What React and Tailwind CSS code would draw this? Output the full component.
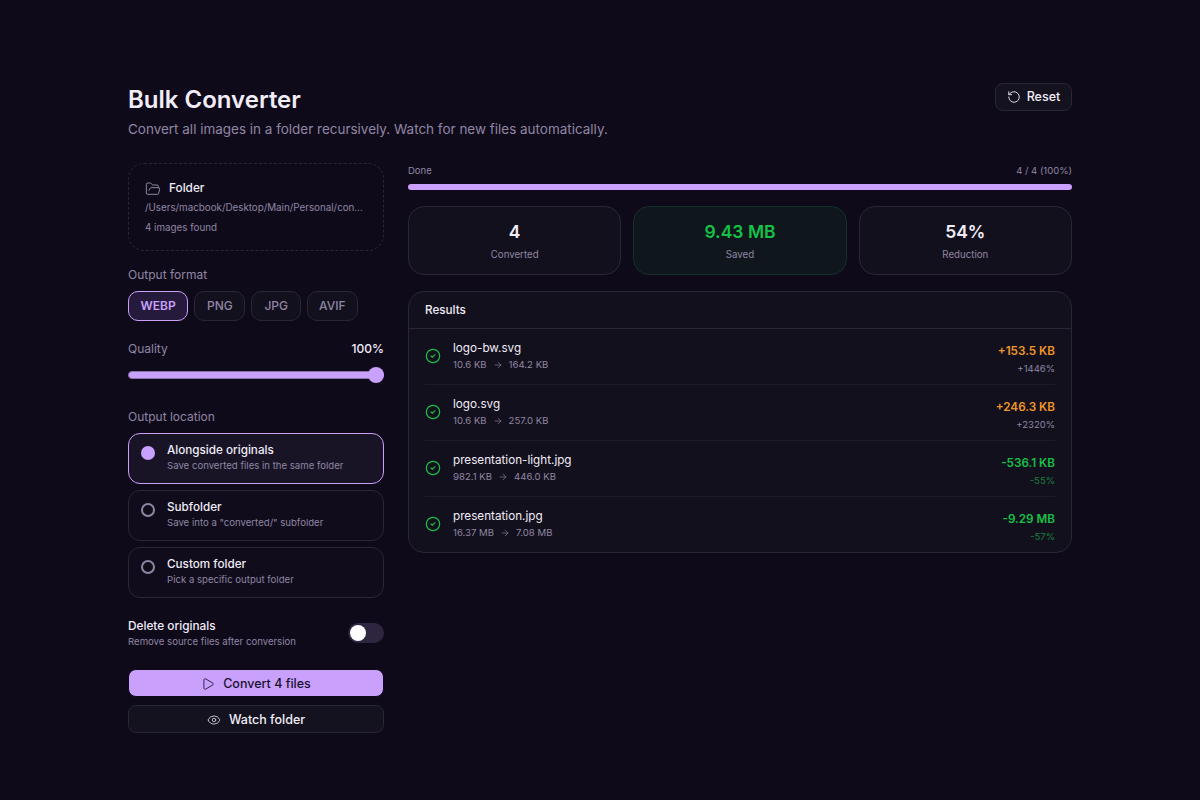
import React from 'react';
import { RotateCcw, FolderOpen, Play, Eye, CircleCheck, ArrowRight } from 'lucide-react';

const rows = [
  { name: 'logo-bw.svg', from: '10.6 KB', to: '164.2 KB', d: '+153.5 KB', p: '+1446%', up: true },
  { name: 'logo.svg', from: '10.6 KB', to: '257.0 KB', d: '+246.3 KB', p: '+2320%', up: true },
  { name: 'presentation-light.jpg', from: '982.1 KB', to: '446.0 KB', d: '-536.1 KB', p: '-55%', up: false },
  { name: 'presentation.jpg', from: '16.37 MB', to: '7.08 MB', d: '-9.29 MB', p: '-57%', up: false },
];
const locations = [
  { t: 'Alongside originals', s: 'Save converted files in the same folder', on: true },
  { t: 'Subfolder', s: 'Save into a "converted/" subfolder' },
  { t: 'Custom folder', s: 'Pick a specific output folder' },
];

function Stat({ value, label, green }) {
  return (
    <div className={`flex-1 h-[69px] rounded-2xl border flex flex-col items-center pt-[15px] ${green ? 'border-[#15302c] bg-[#0f161c]' : 'border-[#2a2635] bg-[#13101d]'}`}>
      <div className={`text-[17.5px] leading-5 font-semibold ${green ? 'text-[#16c047]' : 'text-[#f1edf8]'}`}>{value}</div>
      <div className="text-[9.7px] leading-4 mt-[5px] text-[#8f86a3]">{label}</div>
    </div>
  );
}

export default function App() {
  return (
    <div className="min-h-[800px] bg-[#0f0a1a] font-['Inter',sans-serif] text-[#f1edf8] pt-[83px] px-[128px]">
      <div className="flex justify-between items-start">
        <div>
          <h1 className="text-2xl leading-8 font-semibold text-[#f1edf8] pt-px">Bulk Converter</h1>
          <p className="text-[13.48px] leading-5 mt-[3px] text-[#8f86a3]">Convert all images in a folder recursively. Watch for new files automatically.</p>
        </div>
        <button className="h-7 w-[77px] rounded-lg border border-[#2a2635] bg-[#15121f] flex items-center justify-center gap-1.5 text-[12.5px] font-medium text-[#f1edf8]">
          <RotateCcw size={14} strokeWidth={1.5} />Reset
        </button>
      </div>

      <div className="flex gap-6 mt-[24px]">
        <div className="w-[256px] shrink-0">
          <div className="h-[88px] rounded-2xl border border-dashed border-[#2a2635] px-4 pt-[17px]">
            <div className="flex items-center gap-2 h-4 text-[11.8px] font-medium text-[#f1edf8]">
              <FolderOpen size={16} strokeWidth={1.25} className="text-[#a79fb8]" />Folder
            </div>
            <div className="text-[9.8px] leading-4 mt-[3px] truncate text-[#8f86a3]">/Users/macbook/Desktop/Main/Personal/converter/images</div>
            <div className="text-[9.8px] leading-4 mt-[4px] text-[#8f86a3]">4 images found</div>
          </div>

          <div className="text-xs leading-4 mt-[16px] text-[#8f86a3]">Output format</div>
          <div className="flex gap-1.5 mt-2">
            <button className="h-[30px] w-[60.4px] rounded-[10px] border border-[#c9a0fb] bg-[#261a3c] text-xs font-semibold text-[#c9a0fb]">WEBP</button>
            <button className="h-[30px] w-[51px] rounded-[10px] border border-[#2a2635] bg-[#13101d] text-xs font-medium text-[#8f86a3]">PNG</button>
            <button className="h-[30px] w-[49.6px] rounded-[10px] border border-[#2a2635] bg-[#13101d] text-xs font-medium text-[#8f86a3]">JPG</button>
            <button className="h-[30px] w-[50.6px] rounded-[10px] border border-[#2a2635] bg-[#13101d] text-xs font-medium text-[#8f86a3]">AVIF</button>
          </div>

          <div className="flex justify-between items-center mt-[20px] h-4 text-xs">
            <span className="text-[#8f86a3]">Quality</span>
            <span className="font-medium text-[#f1edf8]">100%</span>
          </div>
          <div className="relative h-4 mt-[10px] flex items-center">
            <div className="h-2 w-full rounded-full bg-[#c9a0fb] border border-[#8a72ab]" />
            <div className="absolute right-0 top-0 w-4 h-4 rounded-full bg-[#c9a0fb]" />
          </div>

          <div className="text-xs leading-4 mt-[26px] text-[#8f86a3]">Output location</div>
          <div className="flex flex-col gap-1.5 mt-2">
            {locations.map((l) => (
              <div key={l.t} className={`h-[51px] rounded-xl border flex items-start pl-3 pt-2 gap-3 ${l.on ? 'border-[#c9a0fb] bg-[#181426]' : 'border-[#2a2635] bg-[#100c1b]'}`}>
                <div className={`w-3.5 h-3.5 rounded-full shrink-0 mt-1 ${l.on ? 'bg-[#c9a0fb]' : 'border-2 border-[#8f86a3]'}`} />
                <div className="min-w-0">
                  <div className="text-[11.7px] leading-4 font-medium text-[#f1edf8]">{l.t}</div>
                  <div className="text-[9.6px] leading-4 text-[#8f86a3]">{l.s}</div>
                </div>
              </div>
            ))}
          </div>

          <div className="flex justify-between items-center mt-[20px]">
            <div>
              <div className="text-[11.8px] leading-4 font-medium text-[#f1edf8]">Delete originals</div>
              <div className="text-[9.6px] leading-4 text-[#8f86a3]">Remove source files after conversion</div>
            </div>
            <div className="w-9 h-5 rounded-full bg-[#2e2640] flex items-center pl-0.5 -mt-[2px]">
              <div className="w-4 h-4 rounded-full bg-white" />
            </div>
          </div>

          <button className="w-full h-7 mt-[19px] pt-0.5 rounded-lg border border-[#0f0a1a] bg-[#c9a0fb] flex items-center justify-center gap-2 text-[12.5px] font-medium text-[#1a1230]">
            <Play size={14} strokeWidth={1.5} />Convert 4 files
          </button>
          <button className="w-full h-7 mt-2 pt-0.5 rounded-lg border border-[#2a2635] bg-[#15121f] flex items-center justify-center gap-2 text-[12.5px] font-medium text-[#f1edf8]">
            <Eye size={14} strokeWidth={1.5} className="text-[#d5d0de]" />Watch folder
          </button>
        </div>

        <div className="flex-1 min-w-0">
          <div className="flex justify-between items-center h-4 text-[9.5px] text-[#8f86a3]">
            <span>Done</span><span>4 / 4 (100%)</span>
          </div>
          <div className="h-1.5 mt-[5px] rounded-full bg-[#c9a0fb]" />
          <div className="flex gap-3 mt-4">
            <Stat value="4" label="Converted" />
            <Stat value="9.43 MB" label="Saved" green />
            <Stat value="54%" label="Reduction" />
          </div>
          <div className="mt-4 rounded-2xl border border-[#2a2635] bg-[#13101d] overflow-hidden">
            <div className="h-[37px] flex items-center px-4 pt-px text-[11.7px] font-medium text-[#f1edf8] border-b border-[#2a2635]">Results</div>
            <div className="px-4">
              {rows.map((r, i) => (
                <div key={r.name} className={`flex items-center gap-3 ${i < 3 ? 'h-14 border-b border-[#1e1a29]' : 'h-[55px]'}`}>
                  <CircleCheck size={16} strokeWidth={1.75} className="text-[#16c047] shrink-0 -mt-0.5" />
                  <div className="flex-1 min-w-0">
                    <div className="text-[11.7px] leading-4 text-[#f1edf8]">{r.name}</div>
                    <div className="flex items-center gap-1.5 mt-px text-[9.6px] leading-4 text-[#8f86a3]">
                      <span>{r.from}</span><ArrowRight size={10} strokeWidth={1.5} /><span>{r.to}</span>
                    </div>
                  </div>
                  <div className="text-right pt-[7px]">
                    <div className={`text-[11.7px] leading-4 font-semibold ${r.up ? 'text-[#f0962a]' : 'text-[#16c047]'}`}>{r.d}</div>
                    <div className={`text-[9.5px] leading-4 mt-0.5 ${r.up ? 'text-[#8f86a3]' : 'text-[#15803d]'}`}>{r.p}</div>
                  </div>
                </div>
              ))}
            </div>
          </div>
        </div>
      </div>
    </div>
  );
}
